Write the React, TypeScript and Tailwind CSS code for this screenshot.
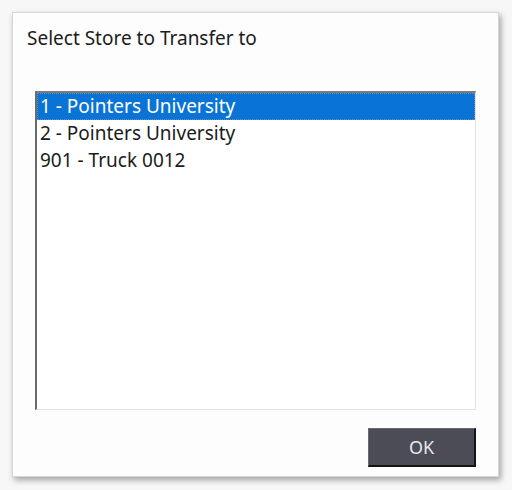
const stores = ['1 - Pointers University', '2 - Pointers University', '901 - Truck 0012'];

export default function App() {
  const selected = 0;
  return (
    <div className="w-[512px] h-[490px] bg-[#f7f7f7] p-[12px] pb-[13px] font-['Noto_Sans',sans-serif]">
      <div className="w-[487px] h-[465px] bg-[#fdfdfd] border border-[#d6d6d6] shadow-[2px_3px_6px_rgba(0,0,0,0.35)] flex flex-col pt-[13px] pl-[14px] pr-[22px]">
        <div className="text-[19px] leading-[24px] text-[#1b1b1b]">Select Store to Transfer to</div>
        <div className="mt-[41px] ml-[8px] h-[319px] border-t-2 border-l-2 border-t-[#7a7a7a] border-l-[#6a6a6a] border-r border-b border-r-[#e3e3e3] border-b-[#e3e3e3] bg-white">
          {stores.map((s, i) => (
            <div
              key={s}
              className={`h-[27px] text-[19px] ${
                i === selected
                  ? 'bg-[#0a74d6] text-white border border-dotted border-[#6b8fb8] leading-[25px] pl-[2px]'
                  : 'text-[#1b1b1b] leading-[27px] pl-[3px]'
              }`}
            >
              {s}
            </div>
          ))}
        </div>
        <div className="flex justify-end mt-[18px]">
          <button className="w-[108px] h-[39px] bg-[#4c4c56] border border-t-[#6a6a72] border-l-[#6a6a72] border-r-2 border-b-2 border-r-[#141414] border-b-[#141414] text-[#e8e8ec] text-[18px]">
            OK
          </button>
        </div>
      </div>
    </div>
  );
}
